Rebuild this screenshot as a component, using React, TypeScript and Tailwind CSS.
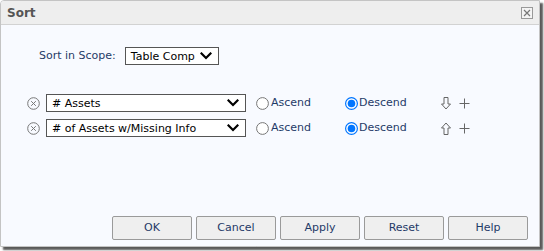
import React from "react";

const font = { fontFamily: '"DejaVu Sans", Verdana, sans-serif' };

function Chevron() {
  return (
    <svg width="12" height="8" viewBox="0 0 12 8" className="shrink-0">
      <path d="M1.5 1.5 L6 6 L10.5 1.5" fill="none" stroke="#000" strokeWidth="2.2" strokeLinecap="square" />
    </svg>
  );
}

function Select({ label, width }: { label: string; width: string }) {
  return (
    <div className={`flex items-center justify-between h-[18px] border border-[#555] bg-white pl-[5px] pr-[6px] ${width}`}>
      <span className="text-[11px] text-black leading-none whitespace-nowrap">{label}</span>
      <Chevron />
    </div>
  );
}

function CircleX() {
  return (
    <svg width="13" height="13" viewBox="0 0 13 13" className="shrink-0">
      <circle cx="6.5" cy="6.5" r="5.8" fill="none" stroke="#777" strokeWidth="1" />
      <path d="M4.2 4.2 L8.8 8.8 M8.8 4.2 L4.2 8.8" stroke="#777" strokeWidth="1" />
    </svg>
  );
}

function Radio({ checked }: { checked: boolean }) {
  return checked ? (
    <svg width="13" height="13" viewBox="0 0 13 13" className="shrink-0">
      <circle cx="6.5" cy="6.5" r="5.9" fill="#fff" stroke="#0075ff" strokeWidth="1.2" />
      <circle cx="6.5" cy="6.5" r="3.8" fill="#0075ff" />
    </svg>
  ) : (
    <svg width="13" height="13" viewBox="0 0 13 13" className="shrink-0">
      <circle cx="6.5" cy="6.5" r="5.9" fill="#fff" stroke="#767676" strokeWidth="1" />
    </svg>
  );
}

function ArrowDown() {
  return (
    <svg width="10" height="13" viewBox="0 0 10 13">
      <path d="M3 0.5 H7 V7 H9.5 L5 12 L0.5 7 H3 Z" fill="none" stroke="#666" strokeWidth="1" />
    </svg>
  );
}
function ArrowUp() {
  return (
    <svg width="10" height="13" viewBox="0 0 10 13">
      <path d="M3 12.5 H7 V6 H9.5 L5 1 L0.5 6 H3 Z" fill="none" stroke="#666" strokeWidth="1" />
    </svg>
  );
}
function Plus() {
  return (
    <svg width="11" height="11" viewBox="0 0 11 11">
      <path d="M5.5 0.5 V10.5 M0.5 5.5 H10.5" stroke="#666" strokeWidth="1" />
    </svg>
  );
}

function SortRow({ label, up }: { label: string; up?: boolean }) {
  return (
    <div className="flex items-center h-[18px]">
      <div className="w-[19px] ml-[26px] flex items-center">
        <CircleX />
      </div>
      <Select label={label} width="w-[200px]" />
      <div className="flex items-center ml-[10px] w-[89px] gap-[2px]">
        <Radio checked={false} />
        <span className="text-[11px] text-[#1f3a68]">Ascend</span>
      </div>
      <div className="flex items-center w-[96px] gap-[1px]">
        <Radio checked={true} />
        <span className="text-[11px] text-[#1f3a68]">Descend</span>
      </div>
      <div className="flex items-center gap-[8px]">
        {up ? <ArrowUp /> : <ArrowDown />}
        <Plus />
      </div>
    </div>
  );
}

function Btn({ children }: { children: React.ReactNode }) {
  return (
    <button className="w-[80px] h-[24px] border border-[#9a9a9a] rounded-[2px] bg-[#efefef] text-[11px] text-[#1f3a68] flex items-center justify-center">
      {children}
    </button>
  );
}

export default function App() {
  return (
    <div className="w-[544px] h-[251px] bg-white" style={font}>
      <div className="w-[540px] h-[247px] flex flex-col bg-[#f8faff] border border-[#c4c4c4] rounded-tl-[4px] shadow-[3px_3px_2px_rgba(0,0,0,0.65)] overflow-hidden">
        <div className="h-[24px] shrink-0 flex items-center justify-between bg-[#eeeeee] border-b border-[#d2d2d2] pl-[6px] pr-[6px]">
          <span className="text-[12px] font-bold text-[#555]">Sort</span>
          <div className="w-[12px] h-[12px] border border-[#999] flex items-center justify-center bg-[#f4f4f4]">
            <svg width="8" height="8" viewBox="0 0 8 8">
              <path d="M1 1 L7 7 M7 1 L1 7" stroke="#777" strokeWidth="1.2" />
            </svg>
          </div>
        </div>
        <div className="flex items-center mt-[22px] ml-[38px] gap-[9px]">
          <span className="text-[11px] text-[#1f3a68]">Sort in Scope:</span>
          <Select label="Table Comp" width="w-[94px]" />
        </div>
        <div className="flex flex-col gap-[7px] mt-[29px]">
          <SortRow label="# Assets" />
          <SortRow label="# of Assets w/Missing Info" up />
        </div>
        <div className="flex justify-end gap-[4px] mt-auto mb-[6px] mr-[11px]">
          <Btn>OK</Btn>
          <Btn>Cancel</Btn>
          <Btn>Apply</Btn>
          <Btn>Reset</Btn>
          <Btn>Help</Btn>
        </div>
      </div>
    </div>
  );
}
